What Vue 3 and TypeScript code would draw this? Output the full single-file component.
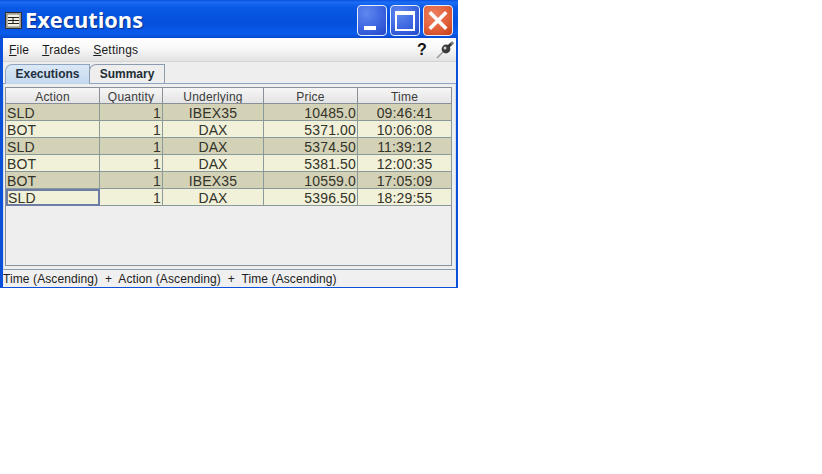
<script setup lang="ts">
interface Row { action: string; qty: number; und: string; price: string; time: string }
const rows: Row[] = [
  { action: 'SLD', qty: 1, und: 'IBEX35', price: '10485.0', time: '09:46:41' },
  { action: 'BOT', qty: 1, und: 'DAX', price: '5371.00', time: '10:06:08' },
  { action: 'SLD', qty: 1, und: 'DAX', price: '5374.50', time: '11:39:12' },
  { action: 'BOT', qty: 1, und: 'DAX', price: '5381.50', time: '12:00:35' },
  { action: 'BOT', qty: 1, und: 'IBEX35', price: '10559.0', time: '17:05:09' },
  { action: 'SLD', qty: 1, und: 'DAX', price: '5396.50', time: '18:29:55' },
]
const headers = ['Action', 'Quantity', 'Underlying', 'Price', 'Time']
</script>

<template>
  <div class="window">
    <div class="titlebar">
      <svg class="appicon" width="17" height="17" viewBox="0 0 17 17">
        <rect x="0.5" y="0.5" width="16" height="16" fill="#c9c5a8" stroke="#2a2f3a" />
        <rect x="2" y="2" width="13" height="13" fill="#f2f0e2" stroke="#3a3a3a" stroke-width="0.6" />
        <path d="M3 5.5h11M3 8.5h11M3 11.5h11M8 5.5v6" stroke="#222" stroke-width="1" fill="none" />
      </svg>
      <span class="title">Executions</span>
      <div class="winbtns">
        <div class="wb blue">
          <span class="min"></span>
        </div>
        <div class="wb blue">
          <span class="max"></span>
        </div>
        <div class="wb red">
          <svg width="30" height="31" viewBox="0 0 30 31">
            <path d="M8 8.5L22 22.5M22 8.5L8 22.5" stroke="#fff" stroke-width="3.6" stroke-linecap="square" />
          </svg>
        </div>
      </div>
    </div>
    <div class="inner">
      <div class="menubar">
        <span class="mi"><u>F</u>ile</span>
        <span class="mi"><u>T</u>rades</span>
        <span class="mi"><u>S</u>ettings</span>
        <span class="spacer"></span>
        <span class="help">?</span>
        <svg class="pin" width="20" height="18" viewBox="0 0 20 18">
          <path d="M2 17L8.5 10.5" stroke="#9a9a9a" stroke-width="1.6" />
          <circle cx="11" cy="8" r="4.4" fill="#3c3c3c" />
          <circle cx="10" cy="7" r="1.5" fill="#d0d0d0" />
          <path d="M13 6L16.5 2.5" stroke="#333" stroke-width="3" />
          <circle cx="17" cy="2.2" r="1.6" fill="#777" />
        </svg>
      </div>
      <div class="tabs">
        <div class="tab active">Executions</div>
        <div class="tab">Summary</div>
      </div>
      <div class="panel">
        <div class="tablebox">
          <div class="grid head">
            <div v-for="h in headers" :key="h" class="th">{{ h }}</div>
          </div>
          <div v-for="(r, i) in rows" :key="i" class="grid row" :class="i % 2 === 0 ? 'dark' : 'light'">
            <div class="td left" :class="{ focus: i === 5 }">{{ r.action }}</div>
            <div class="td right">{{ r.qty }}</div>
            <div class="td center">{{ r.und }}</div>
            <div class="td right">{{ r.price }}</div>
            <div class="td center">{{ r.time }}</div>
          </div>
        </div>
      </div>
      <div class="status">Time (Ascending)&nbsp; +&nbsp; Action (Ascending)&nbsp; +&nbsp; Time (Ascending)</div>
    </div>
  </div>
</template>

<style>
html, body { background: #fff; margin: 0; }
</style>

<style scoped>
.window {
  width: 458px;
  height: 288px;
  background: #0a50d8;
  display: flex;
  flex-direction: column;
  font-family: "Liberation Sans", Arial, sans-serif;
  font-size: 12px;
  color: #1a1a1a;
  overflow: hidden;
}
.titlebar {
  height: 38px;
  flex: none;
  display: flex;
  align-items: center;
  padding: 0 5px 0 5px;
  box-sizing: border-box;
  background: linear-gradient(#0a52e0 0, #1c6cf4 6%, #0a58e6 20%, #0450dc 60%, #0a5cec 88%, #0748d0 100%);
}
.appicon { flex: none; margin-top: 2px; }
.title {
  margin-left: 3px;
  margin-top: 2px;
  color: #fff;
  font-family: "Open Sans", "DejaVu Sans", sans-serif;
  font-weight: 700;
  font-size: 21.8px;
  line-height: 26px;
  text-shadow: 1px 1px 1px #0a2f90;
}
.winbtns {
  margin-left: auto;
  margin-top: 3px;
  display: flex;
  gap: 3px;
}
.wb {
  width: 30px;
  height: 31px;
  box-sizing: border-box;
  border: 1px solid #e8eefc;
  border-radius: 4px;
  position: relative;
  display: flex;
  align-items: center;
  justify-content: center;
}
.wb svg { position: absolute; left: -1px; top: -1px; }
.blue { background: radial-gradient(circle at 30% 25%, #5f88ee 0, #3f68e2 50%, #2247c8 100%); }
.red { background: radial-gradient(circle at 35% 30%, #ee8060 0, #e2603a 55%, #c23e1c 100%); }
.min {
  position: absolute;
  left: 6px;
  bottom: 5px;
  width: 12px;
  height: 4px;
  background: #fff;
}
.max {
  width: 20px;
  height: 20px;
  box-sizing: border-box;
  border: 2px solid #fff;
  border-top-width: 4px;
}
.inner {
  height: 248px;
  flex: none;
  margin: 0 2px 0 3px;
  background: #eeeeee;
  display: flex;
  flex-direction: column;
}
.menubar {
  height: 24px;
  flex: none;
  box-sizing: border-box;
  display: flex;
  align-items: center;
  padding: 0 1px 0 6px;
  gap: 13px;
  background: linear-gradient(#ffffff, #f8f8f8 45%, #e2e2e2);
  border-bottom: 1px solid #d4d4d0;
  font-size: 12px;
  letter-spacing: 0.2px;
}
.spacer { flex: 1; }
.help {
  font-weight: 700;
  font-size: 16px;
  color: #111;
  margin-right: -4px;
}
.pin { flex: none; margin-left: -1px; }
.tabs {
  height: 21px;
  flex: none;
  display: flex;
  align-items: flex-end;
  padding-left: 2px;
  border-bottom: 1px solid #8ea4c0;
}
.tab {
  height: 19px;
  box-sizing: border-box;
  border: 1px solid #8c9cb0;
  border-bottom: none;
  border-radius: 7px 0 0 0;
  background: #eeeeee;
  font-weight: 700;
  font-size: 12px;
  line-height: 18px;
  color: #222d36;
  padding: 0 9px;
  width: 76px;
  text-align: center;
  margin-left: -1px;
}
.tab:first-child { margin-left: 0; width: 85px; }
.tab.active {
  background: linear-gradient(#dbe8f6, #c4d8ee);
  color: #22303e;
  height: 20px;
  margin-bottom: -1px;
  border-color: #8ea4c0;
  line-height: 19px;
}
.panel {
  height: 186px;
  flex: none;
  box-sizing: border-box;
  padding: 3px 3px 3px 1px;
  border-left: 1px solid #d6dce4;
  border-right: 1px solid #d6dce4;
  border-bottom: 1px solid #8a9cb0;
}
.tablebox {
  height: 100%;
  box-sizing: border-box;
  border: 1px solid #8a9098;
  background: #eeeeee;
}
.grid {
  display: grid;
  grid-template-columns: 94px 63px 101px 94px 94px;
}
.head { height: 16px; }
.th {
  box-sizing: border-box;
  border-right: 1px solid #8a9098;
  border-bottom: 1px solid #8a9098;
  background: linear-gradient(#f6f6f6, #e4e4e4);
  text-align: center;
  font-size: 12px;
  line-height: 19px;
  color: #3a3a3a;
  letter-spacing: 0.2px;
  overflow: hidden;
}
.row { height: 17px; }
.dark { background: #d3d2b7; }
.light { background: #f1f0d9; }
.td {
  box-sizing: border-box;
  border-right: 1px solid #8a9a9a;
  border-bottom: 1px solid #8a9a9a;
  font-size: 14px;
  letter-spacing: 0.15px;
  line-height: 18px;
  color: #33332a;
  padding: 0 2px;
  white-space: nowrap;
  overflow: hidden;
}
.left { text-align: left; padding-left: 1px; }
.right { text-align: right; padding-right: 1px; }
.center { text-align: center; }
.focus {
  border: 2px solid #6c7ca4;
  line-height: 14px;
  padding-left: 0;
  background: #f1f0d9;
}
.status {
  height: 17px;
  flex: none;
  box-sizing: border-box;
  background: #f0f0f0;
  font-size: 12px;
  line-height: 18px;
  white-space: nowrap;
  color: #222;
  letter-spacing: 0.1px;
  overflow: hidden;
}
</style>
